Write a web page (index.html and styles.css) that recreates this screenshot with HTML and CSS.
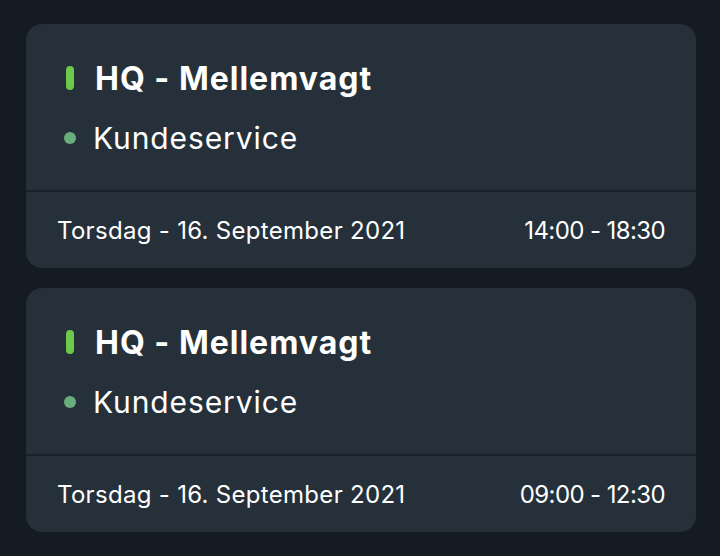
FILE: index.html
```html
<!DOCTYPE html>
<html lang="da">
<head>
    <meta charset="UTF-8">
    <meta name="viewport" content="width=device-width, initial-scale=1.0">
    <title>Vagter</title>
    <link rel="stylesheet" href="styles.css">
</head>
<body>
    <div id="shift-list">
        <div class="shift-card">
            <div class="shift-top">
                <div class="shift-title"><span class="bar"></span>HQ - Mellemvagt</div>
                <div class="shift-dept"><span class="dot"></span>Kundeservice</div>
            </div>
            <div class="shift-bottom">
                <span class="shift-date">Torsdag - 16. September 2021</span>
                <span class="shift-time">14:00 - 18:30</span>
            </div>
        </div>
        <div class="shift-card">
            <div class="shift-top">
                <div class="shift-title"><span class="bar"></span>HQ - Mellemvagt</div>
                <div class="shift-dept"><span class="dot"></span>Kundeservice</div>
            </div>
            <div class="shift-bottom">
                <span class="shift-date">Torsdag - 16. September 2021</span>
                <span class="shift-time">09:00 - 12:30</span>
            </div>
        </div>
    </div>
</body>
</html>
```

FILE: styles.css
```css
body {
    margin: 0;
    background: #151b22;
    font-family: Inter, "Open Sans", sans-serif;
    color: #ffffff;
}
#shift-list {
    display: flex;
    flex-direction: column;
    gap: 20px;
    padding: 24px 24px 0 26px;
}
.shift-card {
    background: #25303a;
    border-radius: 16px;
    overflow: hidden;
}
.shift-top {
    height: 166px;
    box-sizing: border-box;
    padding: 36px 0 0 38px;
}
.shift-title {
    display: flex;
    align-items: center;
    font-size: 32px;
    font-weight: 700;
    letter-spacing: 1px;
    height: 36px;
}
.bar {
    width: 8px;
    height: 24px;
    border-radius: 4px;
    background: #6cc94a;
    margin: 0 21px 0 2px;
}
.shift-dept {
    display: flex;
    align-items: center;
    font-size: 30px;
    letter-spacing: 0.9px;
    height: 36px;
    margin-top: 24px;
}
.dot {
    width: 12px;
    height: 12px;
    border-radius: 50%;
    background: #6aad7b;
    margin-right: 17px;
}
.shift-bottom {
    height: 76px;
    border-top: 2px solid #1a2128;
    display: flex;
    justify-content: space-between;
    align-items: center;
    padding: 0 31px;
    font-size: 24px;
}
.shift-date {
    letter-spacing: 0.3px;
}
.shift-time {
    letter-spacing: -0.6px;
}
```
